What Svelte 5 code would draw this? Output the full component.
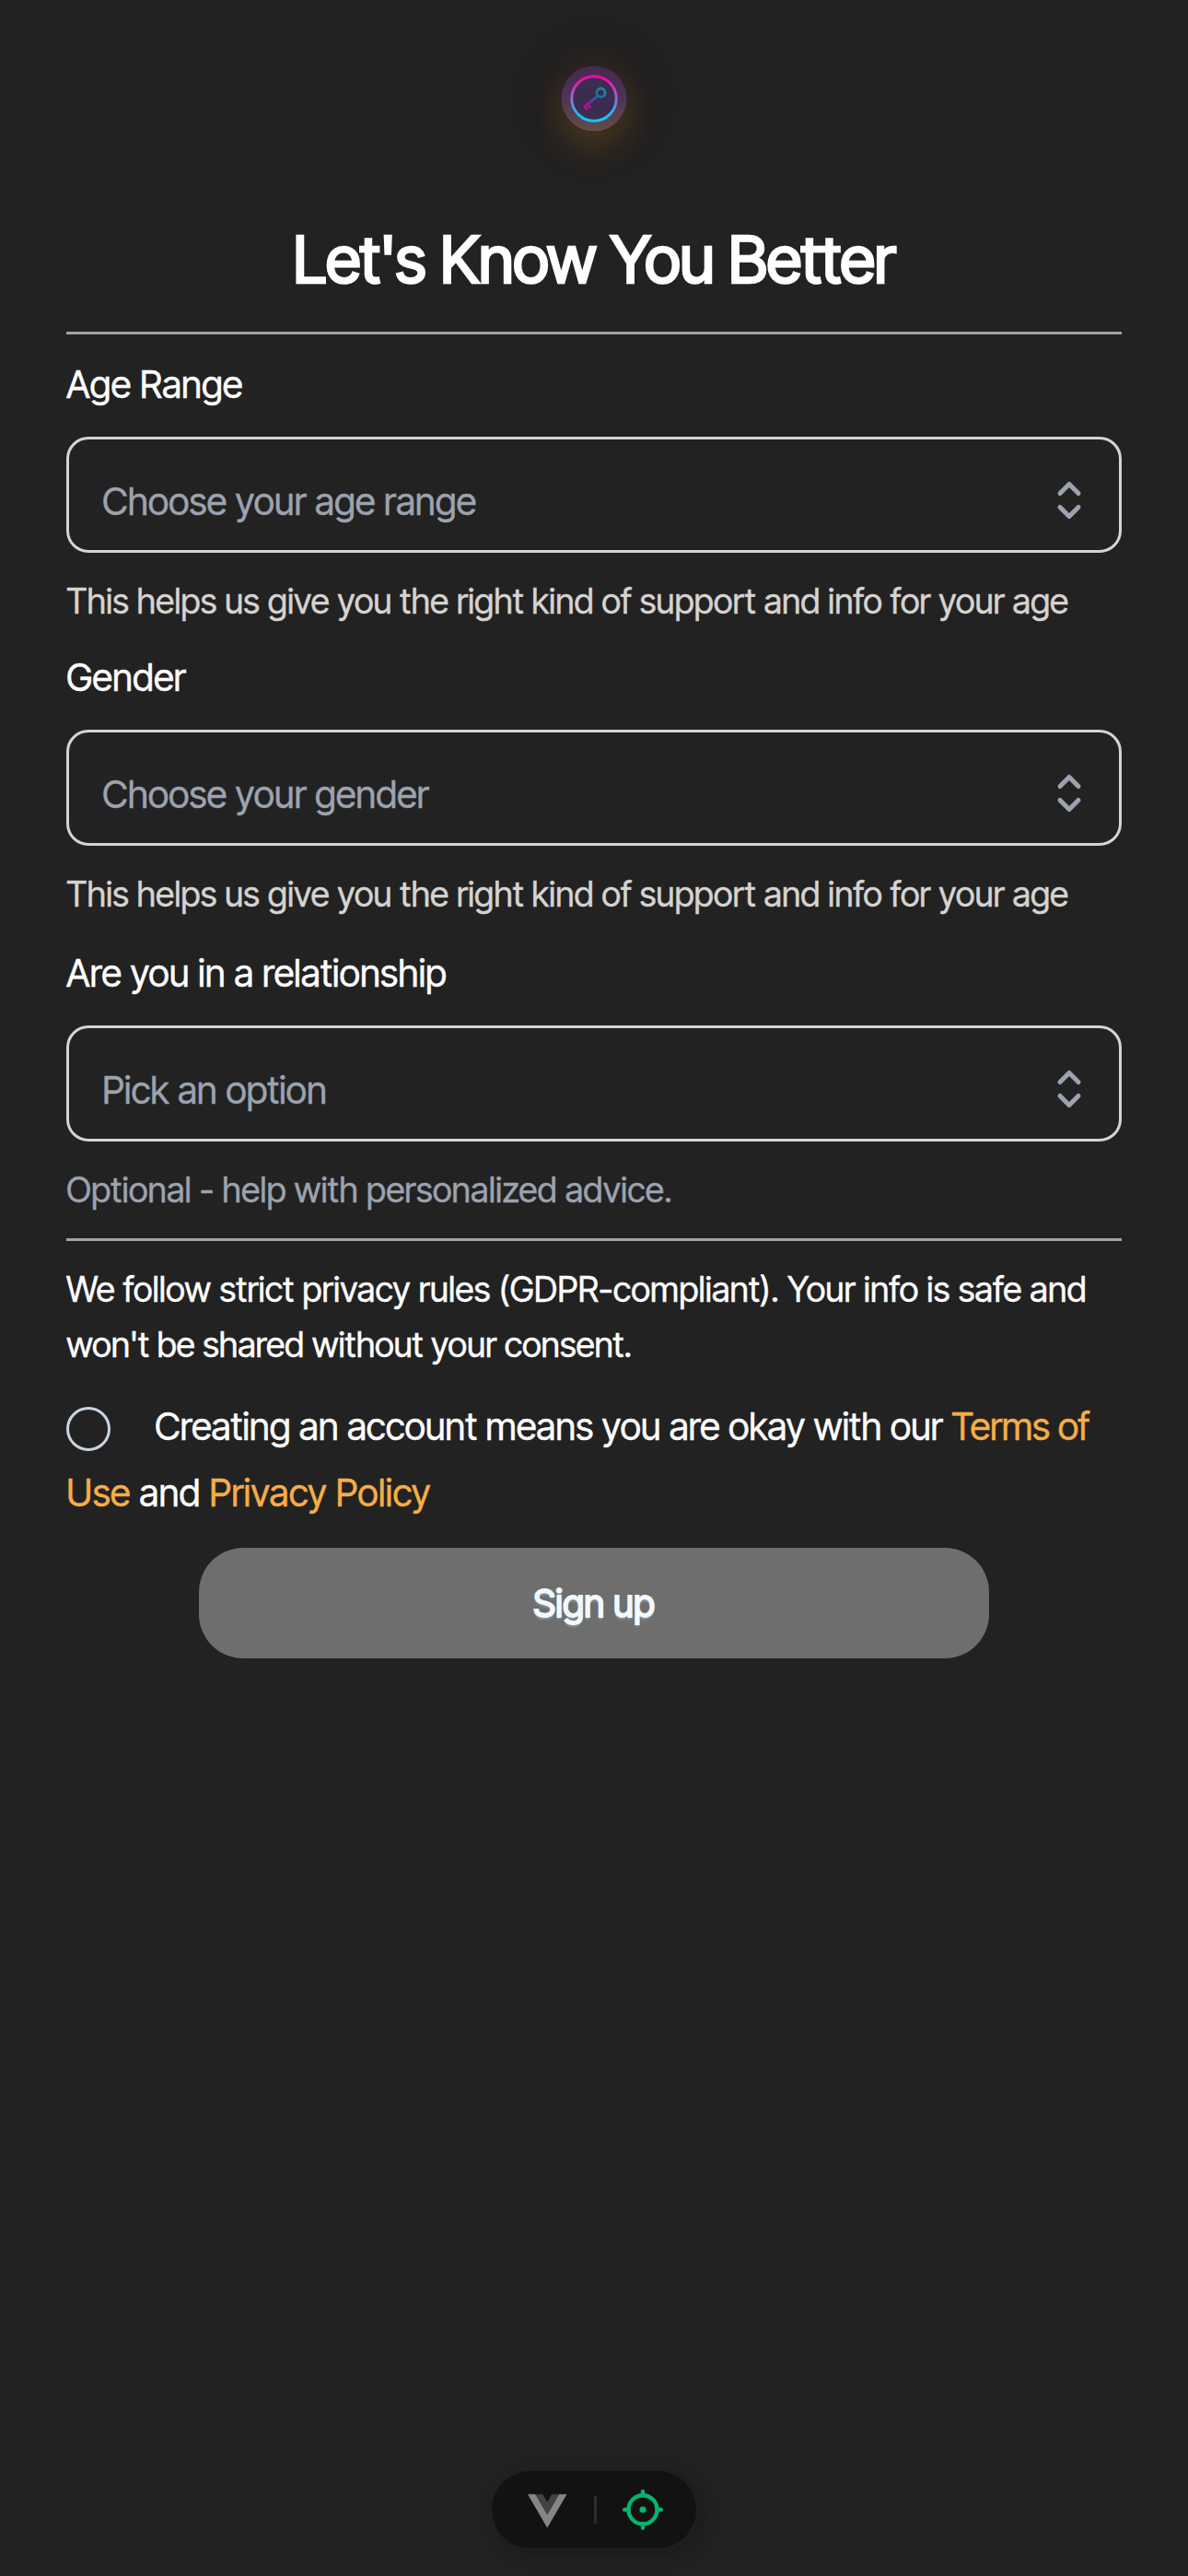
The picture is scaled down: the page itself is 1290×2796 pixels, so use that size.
<script>
  const fields = [
    { id: 'age', label: 'Age Range', placeholder: 'Choose your age range', hint: 'This helps us give you the right kind of support and info for your age' },
    { id: 'gender', label: 'Gender', placeholder: 'Choose your gender', hint: 'This helps us give you the right kind of support and info for your age' },
    { id: 'relationship', label: 'Are you in a relationship', placeholder: 'Pick an option', hint: 'Optional - help with personalized advice.', muted: true }
  ];
</script>

<main class="page">
  <div class="logo">
    <svg viewBox="0 0 72 72" width="72" height="72" aria-hidden="true">
      <defs>
        <linearGradient id="disc" x1="0" y1="0" x2="0" y2="1">
          <stop offset="0" stop-color="#45294f" />
          <stop offset=".5" stop-color="#4f3455" />
          <stop offset="1" stop-color="#664c47" />
        </linearGradient>
        <linearGradient id="ring" x1="0" y1="0" x2="0" y2="1">
          <stop offset="0" stop-color="#ff00a6" />
          <stop offset=".5" stop-color="#8a70d6" />
          <stop offset=".85" stop-color="#16bdf5" />
          <stop offset="1" stop-color="#12c6ff" />
        </linearGradient>
        <linearGradient id="key" gradientUnits="userSpaceOnUse" x1="48" y1="25" x2="25" y2="47">
          <stop offset="0" stop-color="#118f9e" />
          <stop offset=".45" stop-color="#1f64a0" />
          <stop offset=".8" stop-color="#a01490" />
          <stop offset="1" stop-color="#b00f83" />
        </linearGradient>
      </defs>
      <circle cx="36" cy="36" r="35.6" fill="url(#disc)" />
      <circle cx="36" cy="36" r="24.2" fill="#3c2c50" stroke="url(#ring)" stroke-width="2.9" />
      <g fill="none" stroke="url(#key)" stroke-width="3">
        <circle cx="43.5" cy="29.7" r="4.6" />
        <path d="M40 33.2 25.3 45.2M28.8 42.2l3.4 3.8M25.6 44.5l3 3.6" />
      </g>
    </svg>
  </div>

  <h1>Let's Know You Better</h1>

  <form class="form">
    {#each fields as f (f.id)}
      <section class="field {f.id}">
        <span class="label">{f.label}</span>
        <div class="select">
          <span class="placeholder">{f.placeholder}</span>
          <svg class="chevrons" viewBox="0 0 24 24" aria-hidden="true">
            <path d="M8 9l4-4 4 4m0 6l-4 4-4-4" />
          </svg>
        </div>
        <p class="hint" class:muted={f.muted}>{f.hint}</p>
      </section>
    {/each}

    <p class="privacy">We follow strict privacy rules (GDPR-compliant). Your info is safe and <span class="snug">won't be shared without your consent.</span></p>

    <p class="terms"><span class="check"></span>Creating an account means you are okay with our <span class="link tight">Terms of <br /><span class="wide">Use</span></span><span class="wide">{' and '}<span class="link">Privacy Policy</span></span></p>

    <button type="button">Sign up</button>
  </form>

  <aside class="devtools">
    <svg class="vue" viewBox="0 0 256 221" aria-hidden="true">
      <path fill="#858585" d="M0 0l128 220.8L256 0h-51.2L128 132.48 50.56 0z" />
      <path fill="#434343" d="M50.56 0L128 133.12 204.8 0h-47.36L128 51.2 97.92 0z" />
    </svg>
    <span class="bar"></span>
    <svg class="target" viewBox="0 0 44 44" aria-hidden="true">
      <circle cx="22" cy="22" r="15.5" />
      <path d="M22 2.2v4.3M22 37.5v4.3M2.2 22h4.3M37.5 22h4.3" />
      <circle class="dot" cx="22" cy="22" r="3.6" />
    </svg>
  </aside>
</main>

<style>
  :global(body) {
    background: #222;
  }
  .page {
    box-sizing: border-box;
    min-height: 2796px;
    padding: 71px 72px 0;
    font-family: 'Inter Tight', Inter, sans-serif;
    font-size: 40.8px;
    line-height: 60px;
    color: #fff;
    -webkit-text-stroke: 0.4px currentColor;
    display: flex;
    flex-direction: column;
    align-items: center;
  }
  .logo {
    width: 72px;
    height: 72px;
    border-radius: 50%;
    box-shadow:
      0 20px 36px rgba(220, 165, 10, 0.15),
      0 0 48px rgba(255, 50, 10, 0.09),
      0 0 110px 12px rgba(240, 110, 30, 0.04);
  }
  .logo svg {
    display: block;
  }
  h1 {
    margin: 94px 0 33px;
    font-size: 70px;
    line-height: 90px;
    font-weight: 400;
    -webkit-text-stroke: 2.6px #fff;
    letter-spacing: -0.5px;
    white-space: nowrap;
  }
  p {
    margin: 0;
  }
  .form {
    width: 100%;
    border-top: 3px solid #a8a29e;
    padding-top: 24px;
  }
  .field {
    display: flex;
    flex-direction: column;
    padding-bottom: 23px;
  }
  .field.gender {
    padding-bottom: 26px;
  }
  .label {
    letter-spacing: -0.04px;
  }
  .select {
    box-sizing: border-box;
    display: flex;
    justify-content: space-between;
    align-items: flex-start;
    height: 126px;
    margin-top: 27px;
    padding: 37px 24px 0 36px;
    border: 3px solid #d1d5db;
    border-radius: 24px;
  }
  .placeholder {
    color: #9ca3af;
    letter-spacing: -0.14px;
  }
  .chevrons {
    width: 60px;
    height: 60px;
    margin-top: -1px;
    fill: none;
    stroke: #9ca3af;
    stroke-width: 2;
    stroke-linecap: round;
    stroke-linejoin: round;
  }
  .hint {
    margin-top: 22px;
    font-size: 37.8px;
    letter-spacing: -0.1px;
    color: #d6d3d1;
    white-space: nowrap;
  }
  .hint.muted {
    color: #9ca3af;
    letter-spacing: 0.06px;
  }
  .privacy {
    border-top: 3px solid #a8a29e;
    padding-top: 22px;
    font-size: 37.8px;
    letter-spacing: 0.06px;
  }
  .snug {
    letter-spacing: -0.2px;
  }
  .terms {
    margin-top: 23px;
    line-height: 72px;
    letter-spacing: -0.18px;
    white-space: nowrap;
  }
  .tight {
    letter-spacing: -0.5px;
  }
  .wide {
    letter-spacing: 0.06px;
  }
  .check {
    display: inline-block;
    box-sizing: border-box;
    width: 48px;
    height: 48px;
    margin-right: 48px;
    vertical-align: -12px;
    border: 3px solid #cbd5e1;
    border-radius: 50%;
  }
  .link {
    color: #f5ae48;
    -webkit-text-stroke-color: #f5ae48;
  }
  .placeholder,
  .hint.muted {
    -webkit-text-stroke-color: #9ca3af;
  }
  button {
    display: block;
    width: 858px;
    height: 120px;
    margin: 24px auto 0;
    padding: 0;
    border: 0;
    border-radius: 48px;
    background: #6e6e6e;
    color: #f0f9ff;
    font: inherit;
    line-height: 120px;
    letter-spacing: 0.1px;
    -webkit-text-stroke: 1.8px #f0f9ff;
    text-shadow: 0 3px 2px rgba(160, 190, 210, 0.45);
  }
  .devtools {
    position: fixed;
    left: 534px;
    bottom: 30px;
    box-sizing: border-box;
    width: 222px;
    height: 84px;
    padding: 0 36px 0 39px;
    display: flex;
    align-items: center;
    justify-content: space-between;
    border-radius: 42px;
    background: #121212;
    box-shadow:
      3px 3px 0 #1e1e1e,
      6px 6px 24px rgba(0, 0, 0, 0.3);
  }
  .vue {
    width: 42.5px;
    height: 37px;
    margin-top: 2px;
  }
  .bar {
    width: 3px;
    height: 30px;
    margin-left: 2px;
    background: #2c2c2c;
  }
  .target {
    width: 44px;
    height: 44px;
    fill: none;
    stroke: #06b56d;
    stroke-width: 4.4;
    stroke-linecap: round;
  }
  .dot {
    fill: #06b56d;
    stroke: none;
  }
</style>
